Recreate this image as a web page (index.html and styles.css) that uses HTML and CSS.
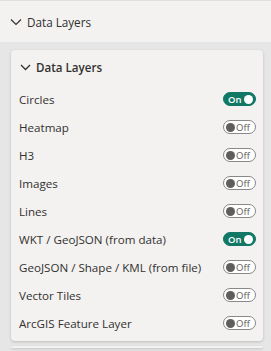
FILE: index.html
```html
<!DOCTYPE html>
<html lang="en">
<head>
<meta charset="UTF-8" />
<meta name="viewport" content="width=device-width, initial-scale=1" />
<title>Data Layers</title>
<link rel="stylesheet" href="styles.css">
</head>
<body>
<div class="pane">
  <div class="pane-header">
    <svg class="chev" width="12" height="8" viewBox="0 0 12 8"><path d="M1 1.5 L6 6.5 L11 1.5" fill="none" stroke="#323130" stroke-width="1.2"/></svg>
    <span>Data Layers</span>
  </div>

  <div class="pane-body">
    <div class="card">
      <div class="card-header">
        <svg class="chev" width="11" height="7" viewBox="0 0 11 7"><path d="M1 1 L5.5 5.5 L10 1" fill="none" stroke="#323130" stroke-width="1.3"/></svg>
        <span>Data Layers</span>
      </div>
      <div class="row"><span>Circles</span><span class="toggle on">On<i></i></span></div>
      <div class="row"><span>Heatmap</span><span class="toggle"><i></i>Off</span></div>
      <div class="row"><span>H3</span><span class="toggle"><i></i>Off</span></div>
      <div class="row"><span>Images</span><span class="toggle"><i></i>Off</span></div>
      <div class="row"><span>Lines</span><span class="toggle"><i></i>Off</span></div>
      <div class="row"><span>WKT / GeoJSON (from data)</span><span class="toggle on">On<i></i></span></div>
      <div class="row"><span>GeoJSON / Shape / KML (from file)</span><span class="toggle"><i></i>Off</span></div>
      <div class="row"><span>Vector Tiles</span><span class="toggle"><i></i>Off</span></div>
      <div class="row"><span>ArcGIS Feature Layer</span><span class="toggle"><i></i>Off</span></div>
    </div>
    <div class="card next"></div>
  </div>
</div>
</body>
</html>
```

FILE: styles.css
```css
html, body {
  height: 351px;
  overflow: hidden;
}
body {
  margin: 0;
  font-family: "Open Sans", "Noto Sans", sans-serif;
  color: #323130;
  background: #e6e6e6;
}
.pane-header {
  height: 41px;
  border-top: 1px solid #e1dfdd;
  background: #f3f2f1;
  display: flex;
  align-items: center;
  gap: 5px;
  padding-left: 10px;
  font-size: 11.7px;
}
.pane-body {
  padding: 8px 8px 0 11px;
}
.card {
  background: #f3f2f1;
  border-radius: 4px;
  box-shadow: 0 1px 3px rgba(0, 0, 0, 0.18);
  padding: 0 7px 4px 8px;
}
.card.next {
  margin-top: 5px;
  height: 2px;
  padding: 0;
}
.card-header {
  height: 35px;
  display: flex;
  align-items: center;
  gap: 5px;
  padding-left: 1px;
  font-size: 11.6px;
  font-weight: 600;
}
.row {
  height: 28px;
  display: flex;
  align-items: center;
  justify-content: space-between;
  font-size: 11.6px;
}
.toggle {
  box-sizing: border-box;
  width: 33px;
  height: 14px;
  border-radius: 7px;
  border: 1px solid #8a8886;
  background: #fff;
  color: #605e5c;
  font-size: 9.5px;
  display: flex;
  align-items: center;
  gap: 1px;
  padding: 0 2px;
}
.toggle i {
  width: 9px;
  height: 9px;
  border-radius: 50%;
  background: #605e5c;
}
.toggle.on {
  background: #117865;
  border-color: #117865;
  color: #fff;
  font-weight: 600;
  justify-content: space-between;
  padding: 0 2px 0 4px;
}
.toggle.on i {
  background: #fff;
}
```
